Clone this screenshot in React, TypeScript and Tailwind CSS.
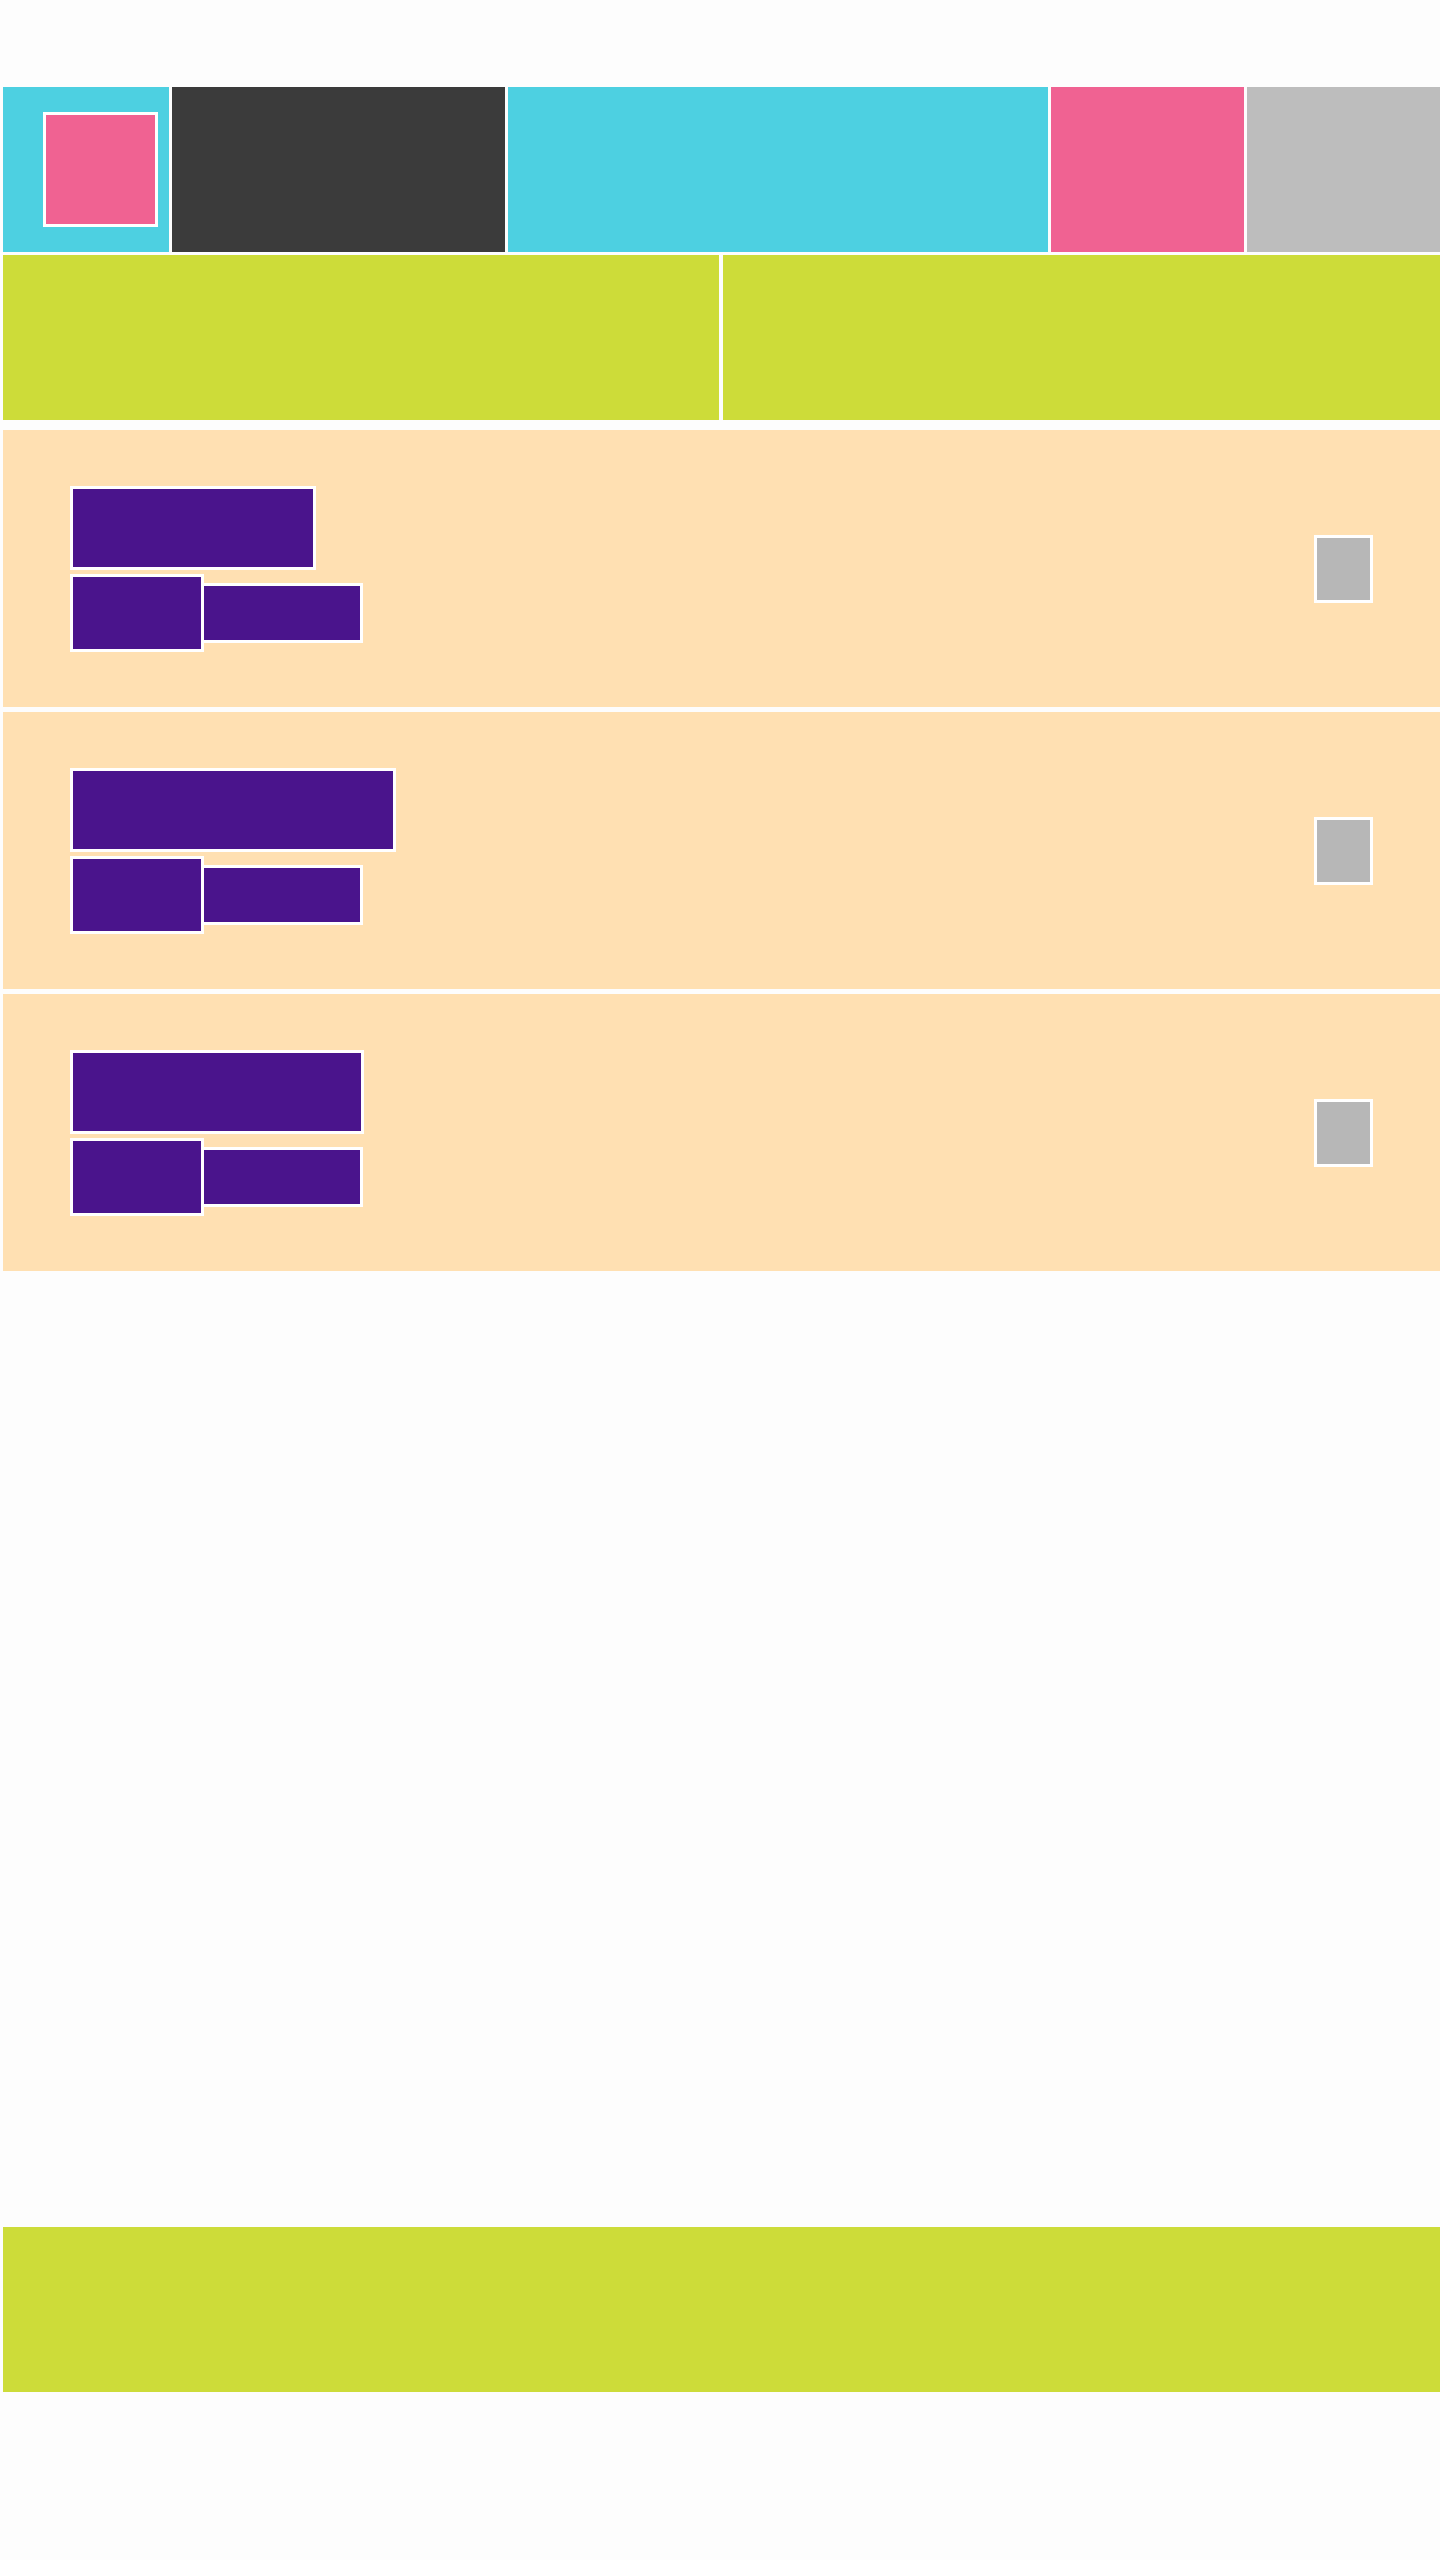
import React from "react";

function Card({ titleW }: { titleW: string }) {
  return (
    <div className="flex h-[277px] w-full items-center justify-between bg-[#ffe0b2] px-[67px]">
      <div className="flex flex-col gap-[4px]">
        <div className={`h-[84px] border-[3px] border-white bg-[#4a148c] ${titleW}`} />
        <div className="flex items-center">
          <div className="h-[78px] w-[134px] border-[3px] border-white bg-[#4a148c]" />
          <div className="-ml-[3px] h-[60px] w-[162px] border-[3px] border-white bg-[#4a148c]" />
        </div>
      </div>
      <div className="h-[68px] w-[59px] border-[3px] border-white bg-[#b7b7b7]" />
    </div>
  );
}

export default function App() {
  return (
    <div className="min-h-[2560px] w-[1440px] bg-[#fdfdfd] pl-[3px] pt-[87px]">
      <div className="flex h-[165px] gap-[3px]">
        <div className="flex h-full w-[166px] items-center bg-[#4dd0e1] pl-[40px]">
          <div className="h-[115px] w-[115px] border-[3px] border-white bg-[#f06292]" />
        </div>
        <div className="h-full w-[333px] bg-[#3b3b3b]" />
        <div className="h-full w-[540px] bg-[#4dd0e1]" />
        <div className="h-full w-[193px] bg-[#f06292]" />
        <div className="h-full flex-1 bg-[#bdbdbd]" />
      </div>
      <div className="mt-[3px] flex h-[165px] gap-[4px]">
        <div className="h-full w-[716px] bg-[#cddc39]" />
        <div className="h-full flex-1 bg-[#cddc39]" />
      </div>
      <div className="mt-[10px] flex flex-col gap-[5px]">
        <Card titleW="w-[246px]" />
        <Card titleW="w-[326px]" />
        <Card titleW="w-[294px]" />
      </div>
      <div className="mt-[956px] h-[165px] bg-[#cddc39]" />
    </div>
  );
}
